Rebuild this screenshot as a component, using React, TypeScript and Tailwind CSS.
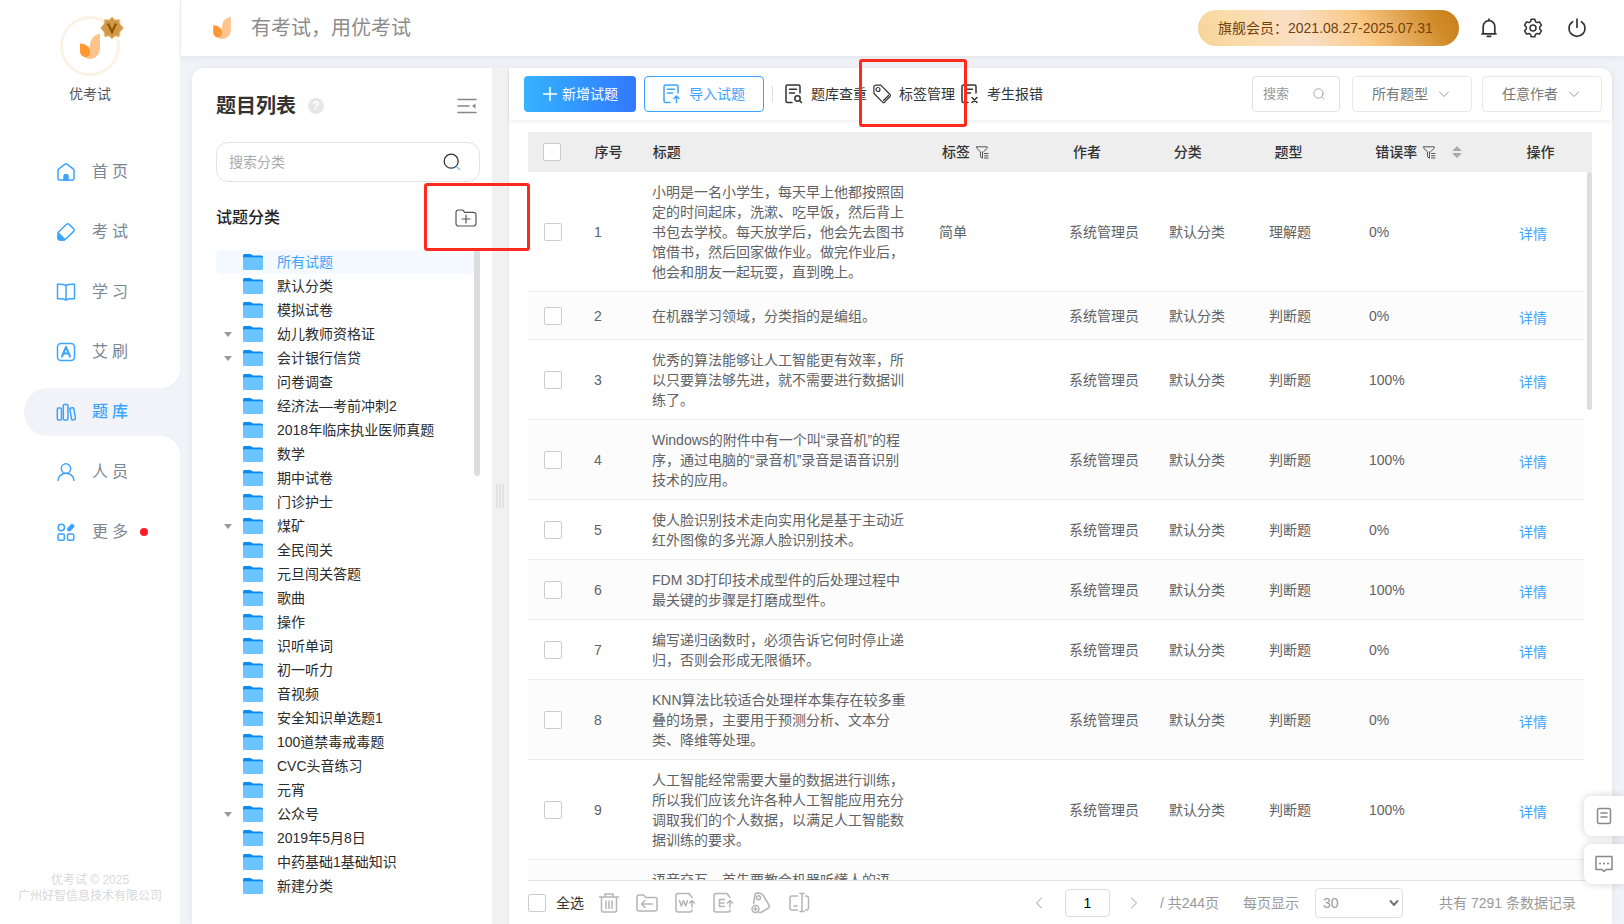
import type { ReactNode } from "react";

const FONT = "font-['Liberation_Sans','Noto_Sans_CJK_SC',sans-serif]";

/* ---------- ICONS ---------- */

type IconProps = { children: ReactNode; className?: string; box?: string; width?: number };

function Icon({ children, className = "w-5 h-5", box = "0 0 20 20", width = 1.5 }: IconProps) {
  return (
    <svg
      viewBox={box}
      className={`shrink-0 ${className}`}
      fill="none"
      stroke="currentColor"
      strokeWidth={width}
      strokeLinecap="round"
      strokeLinejoin="round"
      aria-hidden="true"
    >
      {children}
    </svg>
  );
}

function Flame({ className }: { className: string }) {
  return (
    <svg viewBox="0 0 20 25" className={`shrink-0 ${className}`} aria-hidden="true">
      <path d="M20 0v15a10 10 0 0 1-10 10C6.500 25 3.500 23.200 2 20.500l7-1 1-8C10.200 5 14 .5 20 0Z" fill="#ffc48e" />
      <path d="M0 9.500c6 0 10.200 4 10.200 8.500 0 3-2 5-4.900 5C2.200 23 0 20.500 0 17Z" fill="#ff9831" />
    </svg>
  );
}

function Folder() {
  return (
    <svg viewBox="0 0 20 16" className="w-5 h-4 shrink-0" aria-hidden="true">
      <path d="M0 1.500A1.500 1.500 0 0 1 1.500 0H7c1.500 0 2 1.500 3.500 1.500h8A1.500 1.500 0 0 1 20 3v4H0Z" fill="#0a8bf2" />
      <path d="M0 4.500Q0 3.200 1.500 3.200h17q1.500 0 1.500 1.300v10a1.500 1.500 0 0 1-1.500 1.500h-17A1.500 1.500 0 0 1 0 14.500Z" fill="#6bc3ff" />
    </svg>
  );
}

function Filter() {
  return (
    <Icon className="w-[13px] h-[13px] text-[#555]" box="0 0 13 13" width={1}>
      <path d="M.8.8h10.400v1.500L7.800 5.500M.8.8v1.500l3.700 3.500v5l2 1.400V5.800" />
      <path d="M8.500 7.500H12M8.500 9.800H12M8.500 12H12" />
    </Icon>
  );
}

function Magnifier({ className, tail }: { className: string; tail?: string }) {
  return (
    <Icon className={className} box="0 0 18 18" width={1.3}>
      <circle cx="8.200" cy="8.200" r="7" />
      <path d="m13.500 13.500 3 3" stroke={tail ?? "currentColor"} />
    </Icon>
  );
}

function DocIcon({ className = "w-[18px] h-5", mark }: { className?: string; mark: ReactNode }) {
  return (
    <Icon className={className} box="0 0 18 20">
      <path d="M7 18.500H2.500a1.500 1.500 0 0 1-1.500-1.500V2.500A1.500 1.500 0 0 1 2.500 1h11A1.500 1.500 0 0 1 15 2.500V9" />
      <path d="M4.500 5.200h7M4.500 9h5" />
      {mark}
    </Icon>
  );
}

/* ---------- SIDEBAR ---------- */

const NAV: { label: string; icon: ReactNode; active?: boolean; dot?: boolean }[] = [
  {
    label: "首页",
    icon: (
      <>
        <path d="M2 8.500q0-1 .8-1.600L8.800 2.300q1.200-.9 2.400 0l6 4.600q.8.600.8 1.600V16.500a1.500 1.500 0 0 1-1.500 1.500h-13A1.500 1.500 0 0 1 2 16.500Z" />
        <path d="M8 18v-3.500a2 2 0 0 1 4 0V18Z" fill="currentColor" />
      </>
    ),
  },
  {
    label: "考试",
    icon: (
      <>
        <path d="M3 9.500 10.500 2.300a1.800 1.800 0 0 1 2.500 0l4.700 4.600a1.800 1.800 0 0 1 0 2.500l-8 7.600Q8.500 18 7 18H4.500Q2 18 2 15.500V12q0-1.500 1-2.500Z" />
        <path d="M2.300 11 9 17.500Q8 18 7 18H4.500Q2 18 2 15.500Z" fill="currentColor" />
      </>
    ),
  },
  { label: "学习", icon: <path d="M10 3.500C8 2.300 5 2 1.500 2.300V16.800c3.500-.3 6.500 0 8.500 1.200 2-1.200 5-1.500 8.500-1.200V2.300C15 2 12 2.300 10 3.500ZM10 3.500V18" /> },
  {
    label: "艾刷",
    icon: (
      <>
        <rect x="1.500" y="1.500" width="17" height="17" rx="3.500" />
        <path d="m6 14.500 4-9.500 4 9.500M7.500 11.500h5" strokeWidth="2" />
      </>
    ),
  },
  {
    label: "题库",
    active: true,
    icon: (
      <>
        <rect x="1.300" y="6" width="4.200" height="12" rx="1" />
        <rect x="7.300" y="2.500" width="4.600" height="15.500" rx="1" />
        <path d="m13.700 6.300 3-.6q.8-.1 1 .6l1.800 10.200q.1.900-.7 1l-2.200.4q-.8.100-1-.7Z" />
      </>
    ),
  },
  { label: "人员", icon: <path d="M10 1.800a4.700 4.700 0 1 1 0 9.400 4.700 4.700 0 0 1 0-9.400ZM2 18.500a8 7.300 0 0 1 16 0" /> },
  {
    label: "更多",
    dot: true,
    icon: (
      <>
        <circle cx="5.300" cy="5.500" r="3.200" />
        <rect x="2" y="12" width="6.300" height="6.300" rx="1.200" />
        <rect x="11.500" y="12" width="6.300" height="6.300" rx="1.200" />
        <path d="m12 6.500 4-4.300 2 2-4 4.300h-2Z" fill="currentColor" />
      </>
    ),
  },
];

function Sidebar() {
  return (
    <aside className="w-[180px] shrink-0 bg-white flex flex-col">
      <div className="flex flex-col items-center pt-4">
        <div className="relative w-[60px] h-[60px] rounded-full border-[3px] border-[#fbf3e6] flex items-center justify-center">
          <Flame className="w-5 h-[25px]" />
          <svg viewBox="0 0 24 24" className="absolute -top-[3px] -right-[7px] w-6 h-6" aria-hidden="true">
            <path d="m12 1 3 3 4.500-.5L20 8l3.500 4L20 16l-.5 4.500L15 20l-3 3-3-3-4.500.5L4 16 .5 12 4 8l.5-4.500L9 4Z" fill="#d0994a" stroke="#ecca88" />
            <path d="M8 7.500 12 16l4-8.500" fill="none" stroke="#995600" strokeWidth="2.400" />
          </svg>
        </div>
        <p className="mt-2 text-sm text-[#555]">优考试</p>
      </div>

      <nav className="mt-11 flex flex-col gap-3">
        {NAV.map((item) => (
          <a
            key={item.label}
            href="#"
            className={`relative ml-6 h-12 pl-8 flex items-center gap-4 rounded-l-full text-base tracking-[4px] ${
              item.active ? "bg-[#f1f3f8] text-[#3ba4ff] font-medium" : "text-[#7b8794]"
            }`}
          >
            {item.active && (
              <>
                {/* Concave corners */}
                <span className="absolute right-0 bottom-full w-5 h-5 bg-[radial-gradient(circle_at_0_0,transparent_20px,#f1f3f8_20px)]" />
                <span className="absolute right-0 top-full w-5 h-5 bg-[radial-gradient(circle_at_0_100%,transparent_20px,#f1f3f8_20px)]" />
              </>
            )}
            <Icon className="w-5 h-5 text-[#3ba4ff]">{item.icon}</Icon>
            <span>{item.label}</span>
            {item.dot && <span className="-ml-2 w-2 h-2 rounded-full bg-[#ff1a26]" />}
          </a>
        ))}
      </nav>

      <p className="mt-auto pb-5 text-center text-xs text-[#d8d8d8]">
        优考试 © 2025
        <br />
        广州好智信息技术有限公司
      </p>
    </aside>
  );
}

/* ---------- TOP BAR ---------- */

function TopBar() {
  return (
    <header className="relative h-14 shrink-0 bg-white border-l border-[#e9ebf2] shadow-[0_2px_6px_rgba(0,0,40,0.06)] flex items-center pl-8 pr-[37px]">
      <Flame className="w-[18px] h-[22px]" />
      <h1 className="ml-5 text-xl text-[#8c8c8c]">有考试，用优考试</h1>
      <div className="ml-auto w-[261px] h-9 rounded-full pl-5 flex items-center whitespace-nowrap text-sm text-[#74400f] bg-[linear-gradient(60deg,#f5d49a_0%,#fcdcaa_18%,#f9dfc6_40%,#fac988_62%,#cf8a28_90%,#c87e16_100%)]">
        旗舰会员：2021.08.27-2025.07.31
      </div>
      <button aria-label="通知" className="ml-5 text-[#333]">
        <Icon width={1.7}>
          <path d="M10 1.200v1.300M4.200 15.500V8.500a5.800 5.800 0 0 1 11.600 0v7M3 15.800h14M8.300 18.300h3.400" />
        </Icon>
      </button>
      <button aria-label="设置" className="ml-6 text-[#333]">
        <Icon>
          <path d="M8.200 1.300h3.600l.7 2.400 1.600.9 2.400-.6 1.900 3.200-1.700 1.800v2l1.700 1.800-1.900 3.200-2.400-.6-1.600.9-.7 2.400H8.200l-.7-2.400-1.600-.9-2.400.6-1.900-3.200L3.300 11V9L1.600 7.200 3.500 4l2.400.6 1.600-.9Z" />
          <circle cx="10" cy="10" r="3" />
        </Icon>
      </button>
      <button aria-label="退出" className="ml-6 text-[#333]">
        <Icon width={1.7}>
          <path d="M10 1.200v8M5.500 3.700a8 8 0 1 0 9 0" />
        </Icon>
      </button>
    </header>
  );
}

/* ---------- CATEGORY PANEL ---------- */

const CATEGORIES: { name: string; open?: boolean }[] = [
  { name: "所有试题" },
  { name: "默认分类" },
  { name: "模拟试卷" },
  { name: "幼儿教师资格证", open: true },
  { name: "会计银行信贷", open: true },
  { name: "问卷调查" },
  { name: "经济法—考前冲刺2" },
  { name: "2018年临床执业医师真题" },
  { name: "数学" },
  { name: "期中试卷" },
  { name: "门诊护士" },
  { name: "煤矿", open: true },
  { name: "全民闯关" },
  { name: "元旦闯关答题" },
  { name: "歌曲" },
  { name: "操作" },
  { name: "识听单词" },
  { name: "初一听力" },
  { name: "音视频" },
  { name: "安全知识单选题1" },
  { name: "100道禁毒戒毒题" },
  { name: "CVC头音练习" },
  { name: "元宵" },
  { name: "公众号", open: true },
  { name: "2019年5月8日" },
  { name: "中药基础1基础知识" },
  { name: "新建分类" },
];

function CategoryPanel() {
  return (
    <section className="w-[300px] shrink-0 bg-white rounded-tl-xl pl-6 pr-3 flex flex-col">
      <div className="mt-6 h-7 flex items-center">
        <h2 className="text-xl font-bold text-[#333]">题目列表</h2>
        <span className="ml-3 w-4 h-4 rounded-full bg-[#e6e6e6] text-white text-xs font-bold flex items-center justify-center">?</span>
        <button aria-label="收起" className="ml-auto mr-[3px] text-[#888]">
          <Icon box="0 0 20 16" className="w-5 h-4">
            <path d="M1 1.500h18M1 8h11M1 14.500h18" />
            <path d="m18.500 5.500-3.500 2.500 3.500 2.500Z" fill="currentColor" stroke="none" />
          </Icon>
        </button>
      </div>

      <label className="mt-[22px] h-10 rounded-xl border border-[#e3e3e3] flex items-center pl-3 pr-[18px]">
        <input aria-label="搜索分类" placeholder="搜索分类" className="flex-1 min-w-0 text-sm outline-none placeholder:text-[#aaa]" />
        <Magnifier className="w-[18px] h-[18px] text-[#333]" tail="#6bbcff" />
      </label>

      <div className="mt-6 h-6 flex items-center">
        <h3 className="text-base font-medium text-[#222]">试题分类</h3>
        <button aria-label="新建分类" className="relative ml-auto mr-[3px] text-[#555]">
          <Icon box="0 0 22 18" className="w-[22px] h-[18px]" width={1.2}>
            <path d="M1 3.500A2.500 2.500 0 0 1 3.500 1h4.200l2 2.300h8.800A2.500 2.500 0 0 1 21 5.800v8.700a2.500 2.500 0 0 1-2.500 2.500h-15A2.500 2.500 0 0 1 1 14.500ZM7 10h8M11 6v8" />
          </Icon>
          <span className="absolute z-20 -left-[31px] -top-[26px] w-[106px] h-[68px] rounded-[3px] border-[3px] border-[#ff2a1e]" />
        </button>
      </div>

      <div className="mt-5 flex-1 min-h-0 overflow-hidden flex">
        <ul className="flex-1 min-w-0 text-sm text-[#2b2b2b]">
          {CATEGORIES.map((c, i) => (
            <li key={c.name} className={`h-6 flex items-center pl-2 rounded ${i === 0 ? "bg-[#f4faff] text-[#3ba4ff]" : ""}`}>
              <span className="w-[19px]">
                {c.open && <span className="block w-0 border-x-4 border-t-[5px] border-x-transparent border-t-[#999]" />}
              </span>
              <Folder />
              <span className="ml-3.5 whitespace-nowrap">{c.name}</span>
            </li>
          ))}
        </ul>
        <div className="w-1.5 h-[226px] rounded-b bg-[#dcdddf]" />
      </div>
    </section>
  );
}

/* ---------- QUESTION LIST ---------- */

const ROWS = [
  {
    title: "小明是一名小学生，每天早上他都按照固定的时间起床，洗漱、吃早饭，然后背上书包去学校。每天放学后，他会先去图书馆借书，然后回家做作业。做完作业后，他会和朋友一起玩耍，直到晚上。",
    tag: "简单",
    type: "理解题",
    rate: "0%",
  },
  { title: "在机器学习领域，分类指的是编组。", type: "判断题", rate: "0%" },
  { title: "优秀的算法能够让人工智能更有效率，所以只要算法够先进，就不需要进行数据训练了。", type: "判断题", rate: "100%" },
  { title: "Windows的附件中有一个叫“录音机”的程序，通过电脑的“录音机”录音是语音识别技术的应用。", type: "判断题", rate: "100%" },
  { title: "使人脸识别技术走向实用化是基于主动近红外图像的多光源人脸识别技术。", type: "判断题", rate: "0%" },
  { title: "FDM 3D打印技术成型件的后处理过程中最关键的步骤是打磨成型件。", type: "判断题", rate: "100%" },
  { title: "编写递归函数时，必须告诉它何时停止递归，否则会形成无限循环。", type: "判断题", rate: "0%" },
  { title: "KNN算法比较适合处理样本集存在较多重叠的场景，主要用于预测分析、文本分类、降维等处理。", type: "判断题", rate: "0%" },
  { title: "人工智能经常需要大量的数据进行训练，所以我们应该允许各种人工智能应用充分调取我们的个人数据，以满足人工智能数据训练的要求。", type: "判断题", rate: "100%" },
  { title: "语音交互，首先要教会机器听懂人的语言。", type: "判断题", rate: "0%" },
];

const CHECKBOX = "block appearance-none w-[18px] h-[18px] rounded-xs border border-[#ccc] bg-white";

function Columns() {
  return (
    <colgroup>
      <col className="w-[56px]" />
      <col className="w-[58px]" />
      <col className="w-[287px]" />
      <col className="w-[130px]" />
      <col className="w-[100px]" />
      <col className="w-[100px]" />
      <col className="w-[100px]" />
      <col className="w-[150px]" />
      <col className="w-[75px]" />
    </colgroup>
  );
}

function ToolButton({ icon, label, marked }: { icon: ReactNode; label: string; marked?: boolean }) {
  return (
    <button className="relative flex items-center gap-2 text-sm text-[#333] whitespace-nowrap">
      {icon}
      {label}
      {marked && <span className="absolute z-20 -left-[14px] -top-[25px] w-[108px] h-[68px] rounded-[3px] border-[3px] border-[#ff2a1e]" />}
    </button>
  );
}

function TypeSelect({ label }: { label: string }) {
  return (
    <div className="relative w-[120px] h-9">
      <select aria-label={label} className="appearance-none w-full h-full rounded border border-[#e8e8e8] bg-white pl-[19px] text-sm text-[#777]">
        <option>{label}</option>
      </select>
      <Icon className="absolute right-[22px] top-3 w-3 h-3 text-[#999] pointer-events-none" box="0 0 12 12" width={1}>
        <path d="m1.500 4 4.500 4.500L10.500 4" />
      </Icon>
    </div>
  );
}

function Toolbar() {
  return (
    <div className="h-[52px] shrink-0 flex items-center pl-[15px] pr-2.5 shadow-[0_2px_4px_rgba(0,0,0,0.06)]">
      <button className="w-28 h-9 rounded bg-linear-to-r from-[#36b3ff] to-[#3377ff] text-white text-sm flex items-center justify-center gap-1">
        <Icon className="w-4 h-4" box="0 0 16 16">
          <path d="M8 1.500v13M1.500 8h13" />
        </Icon>
        新增试题
      </button>
      <button className="ml-2 w-[120px] h-9 rounded border border-[#3ba4ff] text-[#3ba4ff] text-sm flex items-center justify-center gap-2">
        <DocIcon mark={<path d="M13.500 18.500v-6M11 14.500l2.500-2.500 2.500 2.500" />} />
        导入试题
      </button>
      <span className="ml-2 mr-3 w-px h-4 bg-[#ddd]" />
      <div className="flex items-center gap-1.5">
        <ToolButton
          label="题库查重"
          icon={
            <DocIcon
              mark={
                <>
                  <circle cx="12.500" cy="14.500" r="2.700" />
                  <path d="m14.700 16.700 1.800 1.800" />
                </>
              }
            />
          }
        />
        <ToolButton
          label="标签管理"
          marked
          icon={
            <Icon className="w-[18px] h-5" box="0 0 18 20" width={1.2}>
              <path d="M.8 3.500Q.8 1 3.300 1l4.500.2L17 10.500q.8 1 0 2l-5.500 5.700q-1 .8-2 0L1 9.500Z" />
              <circle cx="5" cy="5.500" r="2" />
              <path d="m10.500 16.500 5-5" />
            </Icon>
          }
        />
        <ToolButton label="考生报错" icon={<DocIcon mark={<path d="m11 13.500 5 5M16 13.500l-5 5" />} />} />
      </div>

      <div className="ml-auto flex items-center">
        <label className="w-[88px] h-9 rounded border border-[#e3e3e3] flex items-center pl-2.5 pr-3.5">
          <input aria-label="搜索" placeholder="搜索" className="flex-1 min-w-0 text-[13px] outline-none placeholder:text-[#999]" />
          <Magnifier className="w-3 h-3 text-[#999]" />
        </label>
        <div className="ml-3 flex gap-2.5">
          <TypeSelect label="所有题型" />
          <TypeSelect label="任意作者" />
        </div>
      </div>
    </div>
  );
}

function QuestionTable() {
  return (
    <div className="mt-3 ml-[19px] mr-5 flex-1 min-h-0 flex flex-col border-b border-[#e4e4e4]">
      <table className="w-full table-fixed shrink-0 bg-[#eee] text-sm text-[#333]">
        <Columns />
        <thead>
          <tr className="h-10 text-left font-medium">
            <th className="pl-[15px]">
              <input type="checkbox" aria-label="选择本页" className={CHECKBOX} />
            </th>
            <th className="pl-2.5 font-medium">序号</th>
            <th className="pl-2.5 font-medium">标题</th>
            <th className="pl-2.5 font-medium">
              <span className="flex items-center gap-1.5">标签<Filter /></span>
            </th>
            <th className="pl-2.5 font-medium">作者</th>
            <th className="pl-2.5 font-medium">分类</th>
            <th className="pl-2.5 font-medium">题型</th>
            <th className="pl-2.5 font-medium">
              <span className="flex items-center gap-1.5">
                错误率
                <Filter />
                <svg viewBox="0 0 10 12" className="ml-2.5 w-2.5 h-3" fill="#aaa" aria-hidden="true">
                  <path d="m5 0 5 5H0ZM5 12 0 7h10Z" />
                </svg>
              </span>
            </th>
            <th className="pl-2.5 font-medium">操作</th>
          </tr>
        </thead>
      </table>

      <div className="flex-1 min-h-0 overflow-hidden flex items-start gap-[3px]">
        <table className="flex-1 w-full table-fixed border-separate border-spacing-0 text-sm leading-5 text-[#606266]">
          <Columns />
          <tbody>
            {ROWS.map((row, i) => (
              <tr key={row.title} className={`h-12 *:border-b *:border-[#ebebeb] ${i % 2 ? "bg-[#fcfcfc]" : ""}`}>
                <td className="pl-4">
                  <input type="checkbox" aria-label={`选择第${i + 1}题`} className={CHECKBOX} />
                </td>
                <td className="pl-2.5">{i + 1}</td>
                <td className="pl-2.5 pr-5 pt-2.5 pb-[9px]">{row.title}</td>
                <td className="pl-2.5">{row.tag}</td>
                <td className="pl-2.5">系统管理员</td>
                <td className="pl-2.5">默认分类</td>
                <td className="pl-2.5">{row.type}</td>
                <td className="pl-2.5">{row.rate}</td>
                <td className="pl-2.5 pt-1">
                  <a href="#" className="text-[#3ba4ff]">详情</a>
                </td>
              </tr>
            ))}
          </tbody>
        </table>
        <div className="w-[5px] h-[238px] shrink-0 rounded-full bg-[#ddd]" />
      </div>
    </div>
  );
}

const ACTIONS: { label: string; icon: ReactNode }[] = [
  { label: "删除", icon: <path d="M1.500 5h19M7 5V2h8v3M3.500 5v13.500q0 1.500 1.500 1.500h12q1.500 0 1.500-1.500V5M8 9v7.500M11 9v7.500M14 9v7.500" /> },
  { label: "移动", icon: <path d="M1 5Q1 3 3 3h4.500L10 5.500h9q2 0 2 2V17q0 2-2 2H3q-2 0-2-2ZM16.500 12h-11M9 8.500 5.500 12 9 15.500" /> },
  {
    label: "导出Word",
    icon: (
      <>
        <path d="M18 5.500 15 1.500H4q-2 0-2 2V18q0 2 2 2h12q2 0 2-2" />
        <path d="m5.500 8.500 1.800 5.500L9.500 8.500l2.200 5.500 1.800-5.500M18 15V8.500M15.500 11 18 8.500l2.500 2.500" />
      </>
    ),
  },
  {
    label: "导出Excel",
    icon: (
      <>
        <path d="M18 5.500 15 1.500H4q-2 0-2 2V18q0 2 2 2h12q2 0 2-2" />
        <path d="M12.500 7.500H7.500v7h5M7.500 11h4.500M18 15V8.500M15.500 11 18 8.500l2.500 2.500" />
      </>
    ),
  },
  {
    label: "批量标签",
    icon: (
      <>
        <path d="M3.500 11.500 5 3q.3-2 2.300-2l3.200.3L13 3l6.500 11-1 2-7.500 4.500H9" />
        <circle cx="8.500" cy="5.800" r="2" />
        <circle cx="5.500" cy="17" r="3.500" />
        <path d="M4 17h3M5.500 15.500v3" />
      </>
    ),
  },
  { label: "重命名", icon: <path d="M9.500 4H4Q2 4 2 6v10q0 2 2 2h5.500M6 14h3M12 1.500h4M14 1.500v18M12 19.500h4M17.500 4q3 0 3 2v10q0 2-3 2" /> },
];

function Footer() {
  return (
    <div className="h-[43px] shrink-0 pl-[19px] pr-9 flex items-center text-sm text-[#999] whitespace-nowrap">
      <label className="flex items-center gap-2.5 text-[#333]">
        <input type="checkbox" className={CHECKBOX} />
        全选
      </label>
      <div className="ml-3.5 flex items-center gap-4 text-[#b5b5b5]">
        {ACTIONS.map((a) => (
          <button key={a.label} aria-label={a.label}>
            <Icon className="w-[22px] h-[22px]" box="0 0 22 22">{a.icon}</Icon>
          </button>
        ))}
      </div>

      <div className="ml-auto flex items-center">
        <button aria-label="上一页">
          <Icon className="w-3 h-3" box="0 0 12 12" width={1}><path d="M8.500 1 3.500 6l5 5" /></Icon>
        </button>
        <input aria-label="页码" defaultValue="1" className="ml-5 w-[45px] h-7 rounded border border-[#ddd] text-center text-black outline-none" />
        <button aria-label="下一页" className="ml-[18px]">
          <Icon className="w-3 h-3" box="0 0 12 12" width={1}><path d="m3.500 1 5 5-5 5" /></Icon>
        </button>
        <span className="ml-5">/ 共244页</span>
        <label className="ml-6 flex items-center gap-4">
          每页显示
          <span className="relative">
            <select className="block appearance-none w-[88px] h-[30px] rounded border border-[#e0e0e0] bg-white pl-[7px] text-sm">
              <option>30</option>
            </select>
            <Icon className="absolute right-1 top-2.5 w-2.5 h-2.5 text-[#777] pointer-events-none" box="0 0 10 10" width={2}>
              <path d="m1.500 3 3.500 4 3.500-4" />
            </Icon>
          </span>
        </label>
        <span className="ml-9">共有 7291 条数据记录</span>
      </div>
    </div>
  );
}

function FloatingTools() {
  const box = "w-10 h-10 rounded-l-lg bg-white shadow-[0_0_8px_rgba(0,0,0,0.18)] flex items-center pl-2.5 text-[#888]";
  return (
    <div className="absolute z-10 right-0 bottom-10 flex flex-col gap-2">
      <button aria-label="文档" className={box}>
        <Icon>
          <rect x="3.500" y="2.500" width="13" height="15" rx="2" />
          <path d="M7 7h6M7 11h6" />
        </Icon>
      </button>
      <button aria-label="反馈" className={box}>
        <Icon>
          <path d="M2 2.500h16v13h-6L10 17.500 8 15.500H2Z" />
          <path d="M6 9.500h.1M10 9.500h.1M14 9.500h.1" strokeWidth="2" />
        </Icon>
      </button>
    </div>
  );
}

export default function App() {
  return (
    <div className={`relative flex h-screen overflow-hidden bg-[#f1f3f8] ${FONT}`}>
      <Sidebar />
      <div className="flex-1 min-w-0 flex flex-col">
        <TopBar />
        <main className="flex-1 min-h-0 flex pt-3 px-3">
          <div className="flex-1 min-w-0 flex rounded-t-xl shadow-[0_0_8px_rgba(0,0,40,0.06)]">
            <CategoryPanel />
            {/* Drag handle */}
            <div className="w-4 shrink-0 bg-[#f1f1f1] flex items-center justify-center gap-px">
              <span className="w-0.5 h-6 bg-[#e2e2e2]" />
              <span className="w-0.5 h-6 bg-[#e2e2e2]" />
              <span className="w-0.5 h-6 bg-[#e2e2e2]" />
            </div>
            <section className="flex-1 min-w-0 bg-white border-l border-[#e6e6e6] rounded-tr-xl flex flex-col">
              <Toolbar />
              <QuestionTable />
              <Footer />
            </section>
          </div>
        </main>
      </div>
      <FloatingTools />
    </div>
  );
}
